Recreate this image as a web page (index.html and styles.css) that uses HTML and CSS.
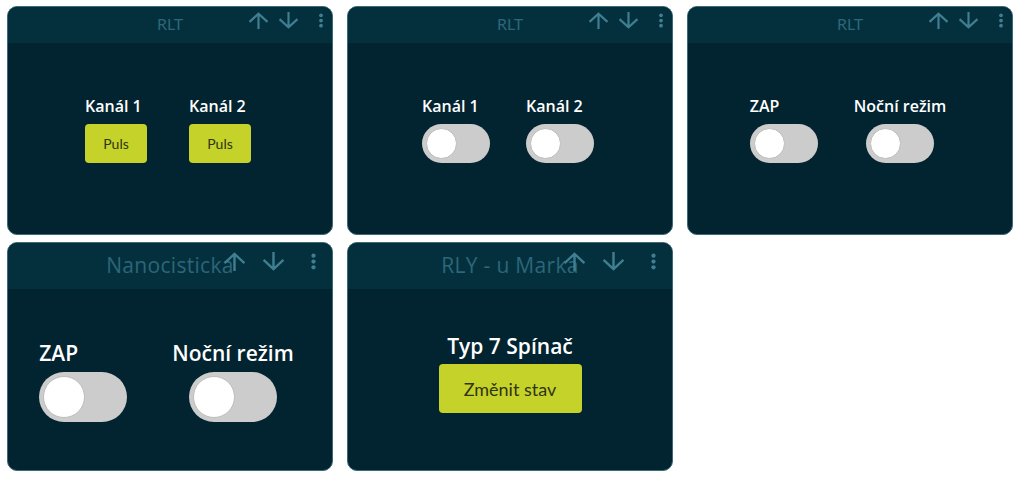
FILE: index.html
```html
<!DOCTYPE html>
<html lang="cs">
<head>
    <meta charset="UTF-8">
    <meta name="viewport" content="width=device-width, initial-scale=1.0">
    <title>Ovládání</title>
    <link rel="stylesheet" href="styles.css">
</head>
<body>
    <div class="grid">
        <!-- RLT - tlačítka -->
        <section class="card">
            <div class="card-head">
                <span class="title">RLT</span>
                <div class="tools">
                    <svg class="ico-up" viewBox="0 0 22 18"><path d="M11 18V2M1.5 10.5L11 1.8l9.5 8.7"/></svg>
                    <svg class="ico-down" viewBox="0 0 22 18"><path d="M11 0v16M1.5 7.5l9.5 8.7 9.5-8.7"/></svg>
                    <svg class="ico-dots" viewBox="0 0 6 16"><circle cx="3" cy="2.5" r="2"/><circle cx="3" cy="8" r="2"/><circle cx="3" cy="13.5" r="2"/></svg>
                </div>
            </div>
            <div class="card-body pulse">
                <div class="item">
                    <span class="label">Kanál 1</span>
                    <button class="btn">Puls</button>
                </div>
                <div class="item">
                    <span class="label">Kanál 2</span>
                    <button class="btn">Puls</button>
                </div>
            </div>
        </section>

        <!-- RLT - přepínače -->
        <section class="card">
            <div class="card-head">
                <span class="title">RLT</span>
                <div class="tools">
                    <svg class="ico-up" viewBox="0 0 22 18"><path d="M11 18V2M1.5 10.5L11 1.8l9.5 8.7"/></svg>
                    <svg class="ico-down" viewBox="0 0 22 18"><path d="M11 0v16M1.5 7.5l9.5 8.7 9.5-8.7"/></svg>
                    <svg class="ico-dots" viewBox="0 0 6 16"><circle cx="3" cy="2.5" r="2"/><circle cx="3" cy="8" r="2"/><circle cx="3" cy="13.5" r="2"/></svg>
                </div>
            </div>
            <div class="card-body">
                <div class="item">
                    <span class="label">Kanál 1</span>
                    <span class="switch"><span class="knob"></span></span>
                </div>
                <div class="item">
                    <span class="label">Kanál 2</span>
                    <span class="switch"><span class="knob"></span></span>
                </div>
            </div>
        </section>

        <section class="card">
            <div class="card-head">
                <span class="title">RLT</span>
                <div class="tools">
                    <svg class="ico-up" viewBox="0 0 22 18"><path d="M11 18V2M1.5 10.5L11 1.8l9.5 8.7"/></svg>
                    <svg class="ico-down" viewBox="0 0 22 18"><path d="M11 0v16M1.5 7.5l9.5 8.7 9.5-8.7"/></svg>
                    <svg class="ico-dots" viewBox="0 0 6 16"><circle cx="3" cy="2.5" r="2"/><circle cx="3" cy="8" r="2"/><circle cx="3" cy="13.5" r="2"/></svg>
                </div>
            </div>
            <div class="card-body">
                <div class="item">
                    <span class="label">ZAP</span>
                    <span class="switch"><span class="knob"></span></span>
                </div>
                <div class="item">
                    <span class="label">Noční režim</span>
                    <span class="switch"><span class="knob"></span></span>
                </div>
            </div>
        </section>

        <!-- druhá řada, větší písmo -->
        <section class="card large">
            <div class="card-head">
                <span class="title">Nanocisticka</span>
                <div class="tools">
                    <svg class="ico-up" viewBox="0 0 22 18"><path d="M11 18V2M1.5 10.5L11 1.8l9.5 8.7"/></svg>
                    <svg class="ico-down" viewBox="0 0 22 18"><path d="M11 0v16M1.5 7.5l9.5 8.7 9.5-8.7"/></svg>
                    <svg class="ico-dots" viewBox="0 0 6 16"><circle cx="3" cy="2.5" r="2"/><circle cx="3" cy="8" r="2"/><circle cx="3" cy="13.5" r="2"/></svg>
                </div>
            </div>
            <div class="card-body">
                <div class="item">
                    <span class="label">ZAP</span>
                    <span class="switch"><span class="knob"></span></span>
                </div>
                <div class="item">
                    <span class="label">Noční režim</span>
                    <span class="switch"><span class="knob"></span></span>
                </div>
            </div>
        </section>

        <section class="card large">
            <div class="card-head">
                <span class="title">RLY - u Marka</span>
                <div class="tools">
                    <svg class="ico-up" viewBox="0 0 22 18"><path d="M11 18V2M1.5 10.5L11 1.8l9.5 8.7"/></svg>
                    <svg class="ico-down" viewBox="0 0 22 18"><path d="M11 0v16M1.5 7.5l9.5 8.7 9.5-8.7"/></svg>
                    <svg class="ico-dots" viewBox="0 0 6 16"><circle cx="3" cy="2.5" r="2"/><circle cx="3" cy="8" r="2"/><circle cx="3" cy="13.5" r="2"/></svg>
                </div>
            </div>
            <div class="card-body single">
                <div class="item center">
                    <span class="label">Typ 7 Spínač</span>
                    <button class="btn wide">Změnit stav</button>
                </div>
            </div>
        </section>
    </div>
</body>
</html>
```

FILE: styles.css
```css
body {
    margin: 0;
    padding: 0;
    background-color: #ffffff;
    font-family: 'Lato', 'Open Sans', sans-serif;
}
.grid {
    display: grid;
    grid-template-columns: repeat(3, 326px);
    grid-auto-rows: 229px;
    column-gap: 14px;
    row-gap: 7px;
    padding: 6px 0 0 7px;
}
.card {
    position: relative;
    background-color: #012430;
    border: 1.5px solid #3b6b79;
    border-radius: 10px;
    overflow: hidden;
    box-sizing: border-box;
}
.card-head {
    height: 36px;
    background-color: #04303d;
    display: flex;
    justify-content: center;
    align-items: center;
}
.title {
    color: #2b667a;
    font-size: 16px;
    margin-top: -3px;
}
.tools {
    position: absolute;
    top: 5px;
    right: 8px;
    display: flex;
    align-items: center;
}
.tools svg {
    fill: none;
    stroke: #3f7f91;
    stroke-width: 2.3;
}
.ico-up, .ico-down {
    width: 21px;
    height: 17px;
}
.ico-up {
    margin-right: 9px;
}
.ico-down {
    margin-right: 19px;
}
.ico-dots {
    width: 6px;
    height: 15px;
    fill: #3f7f91 !important;
    stroke: none !important;
}
.card-body {
    display: flex;
    justify-content: center;
    align-items: flex-start;
    gap: 36px;
    padding: 53px 4px 0 0;
}
.card-body.pulse {
    gap: 42px;
}
.item {
    display: flex;
    flex-direction: column;
    align-items: flex-start;
}
.item.center {
    align-items: center;
}
.label {
    color: #ffffff;
    font-family: 'Open Sans', sans-serif;
    font-size: 16px;
    font-weight: 600;
    line-height: 20px;
    margin-bottom: 8px;
}
.btn {
    align-self: center;
    width: 62px;
    height: 39px;
    border: none;
    border-radius: 4px;
    background-color: #c5d22a;
    color: #2f3512;
    font-family: inherit;
    font-size: 14px;
    cursor: pointer;
}
.switch {
    align-self: center;
    position: relative;
    display: block;
    width: 68px;
    height: 39px;
    border-radius: 20px;
    background-color: #cccccc;
}
.knob {
    position: absolute;
    left: 4px;
    top: 4px;
    width: 29px;
    height: 29px;
    border-radius: 50%;
    background-color: #ffffff;
    border: 1px solid #bdbdbd;
}

/* druhá řada */
.large .card-head {
    height: 46px;
}
.large .title {
    font-family: 'Open Sans', sans-serif;
    font-size: 21px;
    letter-spacing: 0.3px;
}
.large .tools {
    top: 8px;
    right: 15px;
}
.large .ico-up, .large .ico-down {
    width: 23px;
    height: 21px;
}
.large .ico-up {
    margin-right: 16px;
}
.large .ico-down {
    margin-right: 25px;
}
.large .ico-dots {
    width: 7px;
    height: 17px;
}
.large .card-body {
    gap: 45px;
    padding: 51px 7px 0 0;
}
.large .label {
    font-size: 21px;
    line-height: 26px;
    font-weight: 600;
    margin-bottom: 6px;
}
.large .switch {
    width: 88px;
    height: 50px;
    border-radius: 25px;
}
.large .knob {
    left: 4px;
    top: 4px;
    width: 40px;
    height: 40px;
}
.large .card-body.single {
    padding: 44px 0 0 0;
}
.large .label + .btn.wide {
    margin-top: -1px;
}
.large .btn.wide {
    width: 143px;
    height: 49px;
    font-size: 18px;
    font-weight: 400;
}
```
